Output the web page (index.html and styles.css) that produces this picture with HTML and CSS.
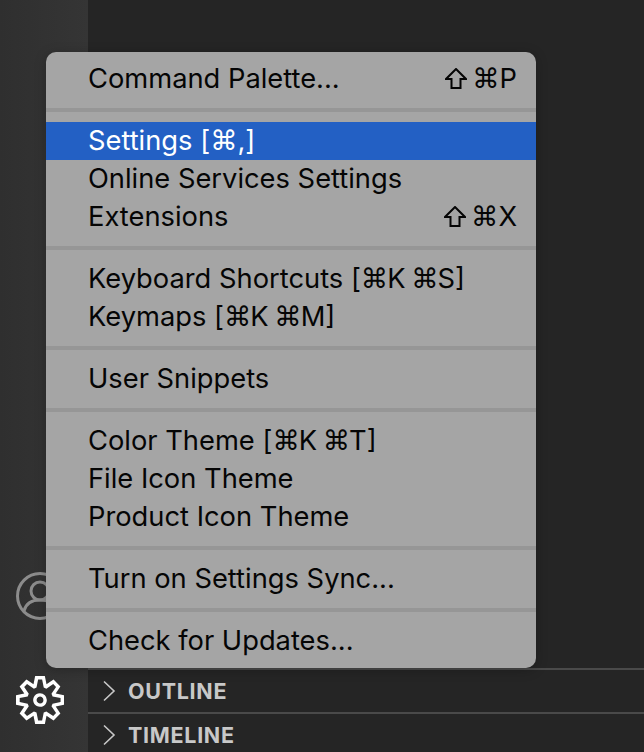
FILE: index.html
```html
<!DOCTYPE html>
<html>

<head>
  <meta http-equiv="Content-Type" content="text/html; charset=UTF-8">
  <title>Manage menu</title>
  <link rel="stylesheet" href="styles.css">
</head>

<body>

  <div class="activity">
    <div class="activity-spacer"></div>
    <svg class="icon-account" width="48" height="48" viewBox="0 0 48 48">
      <circle cx="24" cy="24" r="22.5" />
      <circle cx="24" cy="19" r="9" />
      <path d="M8 39c2-8 8-11 16-11s14 3 16 11" />
    </svg>
    <svg class="icon-gear" width="48" height="48" viewBox="0 0 24 24">
      <path fill-rule="evenodd" d="M19.85 8.75l4.15.83v4.84l-4.15.83 2.35 3.52-3.42 3.42-3.52-2.35-.83 4.16H9.58l-.83-4.15-3.52 2.35-3.42-3.42 2.35-3.52L0 14.42V9.58l4.15-.83L1.8 5.23 5.23 1.8l3.52 2.35L9.58 0h4.84l.83 4.15 3.52-2.35 3.42 3.42-2.35 3.53zm-1.57 5.07l4-.81v-2l-4-.81-.54-1.3 2.29-3.43-1.43-1.43-3.43 2.29-1.3-.54-.81-4h-2l-.81 4-1.3.54-3.43-2.29-1.43 1.43L6.38 8.9l-.54 1.3-4 .81v2l4 .81.54 1.3-2.29 3.43 1.43 1.43 3.43-2.29 1.3.54.81 4h2l.81-4 1.3-.54 3.43 2.29 1.43-1.43-2.29-3.43.54-1.3zm-8.186-4.672A3.43 3.43 0 0 1 12 8.57 3.44 3.44 0 0 1 15.43 12a3.43 3.43 0 1 1-5.336-2.852zm.956 4.274c.281.188.612.288.95.288A1.7 1.7 0 0 0 13.71 12a1.71 1.71 0 1 0-2.66 1.422z" />
    </svg>
  </div>

  <div class="sidebar">
    <div class="sidebar-spacer"></div>
    <div class="section">
      <svg class="chevron" width="14" height="22" viewBox="0 0 14 22"><path d="M2 1.500l10 9.500-10 9.500" /></svg>
      <span>OUTLINE</span>
    </div>
    <div class="section">
      <svg class="chevron" width="14" height="22" viewBox="0 0 14 22"><path d="M2 1.500l10 9.500-10 9.500" /></svg>
      <span>TIMELINE</span>
    </div>
  </div>

  <div class="menu">
    <div class="item first"><span>Command Palette...</span><span class="keys"><svg class="shift" width="22" height="21" viewBox="0 0 22 21"><path d="M11 1l10 10h-5.500v9h-9v-9H1z" /></svg><span class="sym">⌘</span>P</span></div>
    <div class="sep"></div>
    <div class="item active"><span>Settings [<span class="sym">⌘</span>,]</span></div>
    <div class="item"><span>Online Services Settings</span></div>
    <div class="item"><span>Extensions</span><span class="keys"><svg class="shift" width="22" height="21" viewBox="0 0 22 21"><path d="M11 1l10 10h-5.500v9h-9v-9H1z" /></svg><span class="sym">⌘</span>X</span></div>
    <div class="sep"></div>
    <div class="item"><span>Keyboard Shortcuts <span class="chord">[<span class="sym">⌘</span>K <span class="sym">⌘</span>S]</span></span></div>
    <div class="item"><span>Keymaps <span class="chord">[<span class="sym">⌘</span>K <span class="sym">⌘</span>M]</span></span></div>
    <div class="sep"></div>
    <div class="item"><span>User Snippets</span></div>
    <div class="sep"></div>
    <div class="item"><span>Color Theme <span class="chord">[<span class="sym">⌘</span>K <span class="sym">⌘</span>T]</span></span></div>
    <div class="item"><span>File Icon Theme</span></div>
    <div class="item"><span>Product Icon Theme</span></div>
    <div class="sep"></div>
    <div class="item"><span>Turn on Settings Sync...</span></div>
    <div class="sep"></div>
    <div class="item"><span>Check for Updates...</span></div>
  </div>

</body>

</html>
```

FILE: styles.css
```css
html,
body {
  height: 100%;
}

body {
  margin: 0;
  display: flex;
  overflow: hidden;
  background: #252525;
  font-family: Inter, "Liberation Sans", sans-serif;
}

.activity {
  width: 88px;
  flex-shrink: 0;
  box-sizing: border-box;
  padding-right: 8px;
  display: flex;
  flex-direction: column;
  align-items: center;
  background: linear-gradient(90deg, #2f2f2f, #353535);
}

.activity-spacer {
  flex: 1;
}

.icon-account {
  margin-bottom: 56px;
  fill: none;
  stroke: #8c8c8c;
  stroke-width: 3;
}

.icon-gear {
  margin-bottom: 28px;
  fill: #ffffff;
}

.sidebar {
  flex: 1;
  display: flex;
  flex-direction: column;
}

.sidebar-spacer {
  height: 668px;
  flex-shrink: 0;
}

.section {
  height: 42px;
  flex-shrink: 0;
  border-top: 2px solid #4a4a4a;
  display: flex;
  align-items: center;
  color: #c8c8c8;
  font-size: 21.5px;
  font-weight: 700;
  letter-spacing: 0.7px;
}

.chevron {
  margin: 0 12px 0 14px;
  fill: none;
  stroke: #c8c8c8;
  stroke-width: 1.6;
}

.menu {
  position: absolute;
  left: 46px;
  top: 52px;
  width: 490px;
  height: 616px;
  box-sizing: border-box;
  padding: 7px 0 8px;
  border-radius: 10px;
  background: #a5a5a5;
  box-shadow: 0 2px 12px rgba(0, 0, 0, 0.25);
  color: #050505;
  font-size: 27.3px;
}

.item {
  height: 38px;
  box-sizing: border-box;
  padding: 0 19px 2px 42px;
  display: flex;
  align-items: center;
  justify-content: space-between;
  white-space: nowrap;
}

.first {
  padding-bottom: 0;
}

.first + .sep {
  margin-top: 11px;
}

.active {
  background: #2360c4;
  color: #ffffff;
}

.sep {
  height: 4px;
  margin: 10px 0;
  background: #969696;
}

.keys {
  display: flex;
  align-items: center;
}

.shift {
  margin-right: 5px;
  fill: none;
  stroke: #050505;
  stroke-width: 2;
}

.chord {
  word-spacing: -2px;
}

.chord .sym {
  margin-right: -1px;
}

.sym {
  font-family: "DejaVu Sans", sans-serif;
}
```
